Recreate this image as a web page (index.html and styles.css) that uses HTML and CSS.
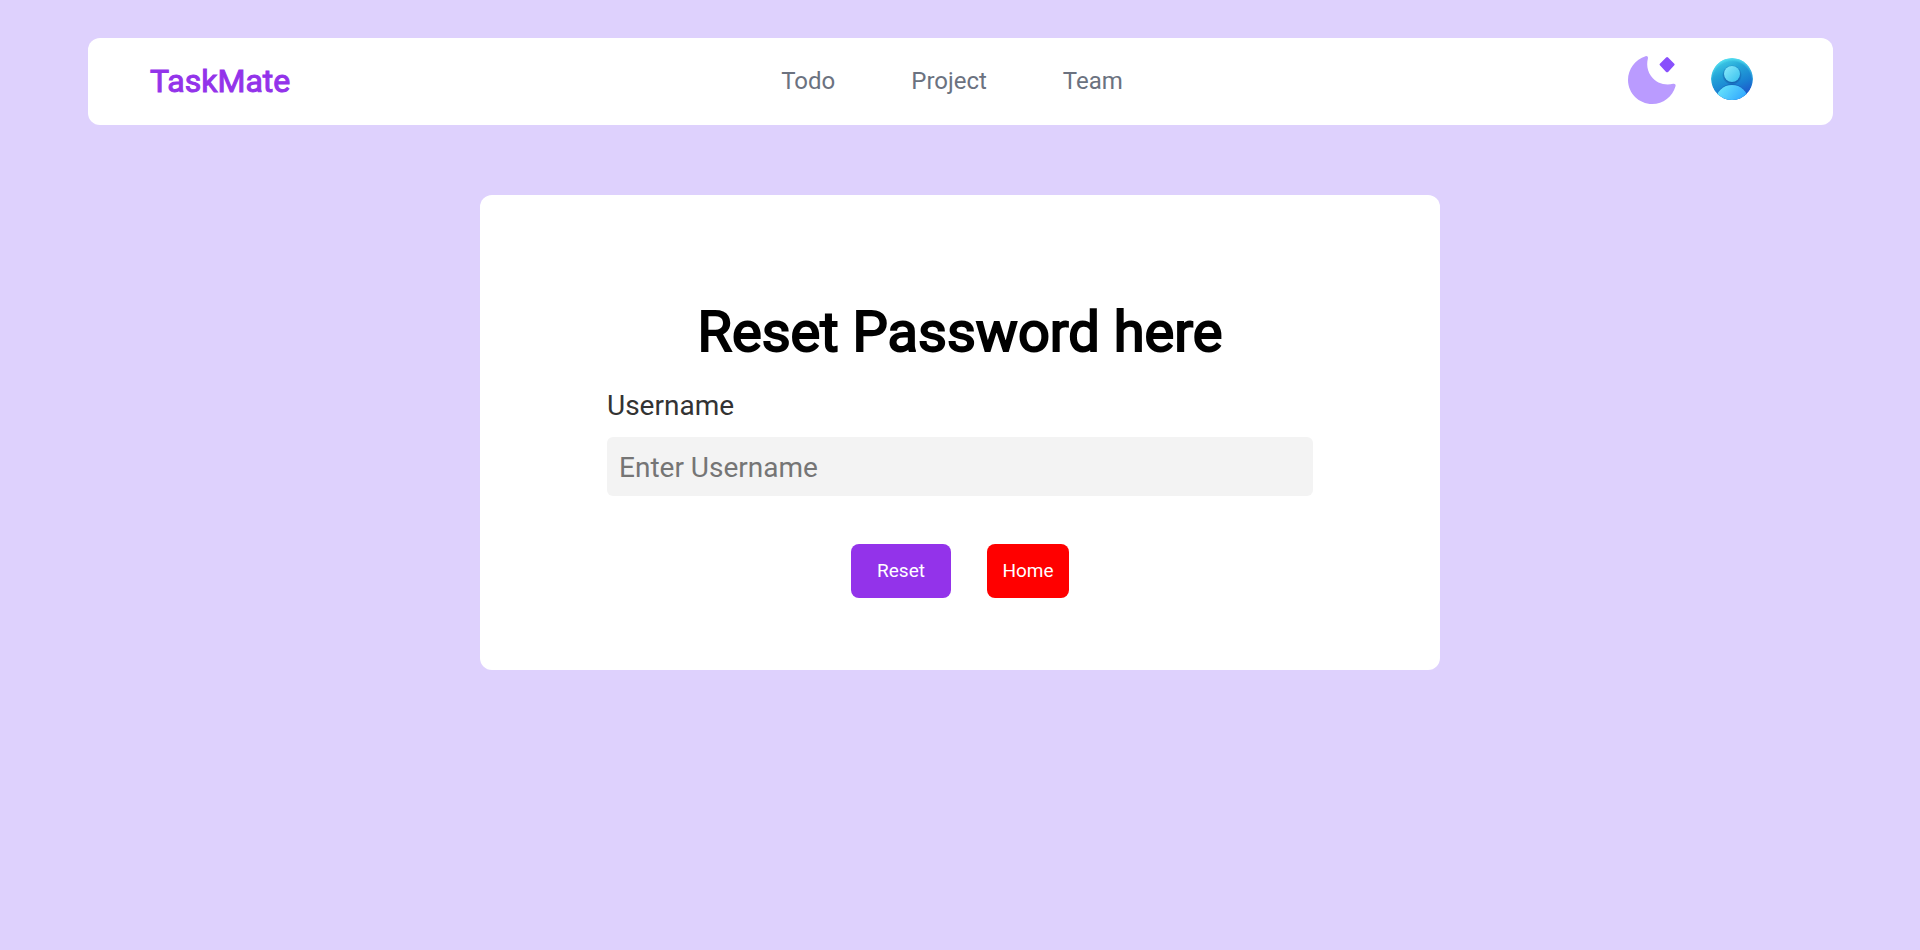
FILE: index.html
```html
<!DOCTYPE html>
<html lang="en">
<head>
<meta charset="utf-8">
<meta name="viewport" content="width=device-width, initial-scale=1">
<title>TaskMate</title>
<link rel="stylesheet" href="styles.css">
</head>
<body>
<header class="navbar">
  <a class="brand" href="#">TaskMate</a>
  <nav class="links">
    <a href="#">Todo</a>
    <a href="#">Project</a>
    <a href="#">Team</a>
  </nav>
  <div class="actions">
    <button class="icon-button" type="button" aria-label="Toggle dark mode">
      <svg width="48" height="48" viewBox="0 0 48 48" aria-hidden="true">
        <path fill="#ba9bff" d="M17.600 .2C19.200-.3 20.300 1 19.900 2.600C18.400 8.800 19.300 14.800 23 20C28.300 27.400 37 29.800 45.200 27.800C46.900 27.400 48 28.600 47.500 30.200C44.500 40.700 35.200 48 24.200 48C10.900 48 0 37.300 0 24C0 13 7.300 3.400 17.600 .2Z"/>
        <path fill="#8950fc" d="M38.100 1.500Q39.100 .5 40.100 1.500L46.300 7.700Q47.100 8.500 46.300 9.300L40.100 15.900Q39.100 16.700 38.100 15.900L31.900 9.300Q31.100 8.500 31.900 7.700Z"/>
      </svg>
    </button>
    <button class="icon-button" type="button" aria-label="Account">
      <svg width="43" height="44" viewBox="0 0 43 44" aria-hidden="true">
        <defs>
          <linearGradient id="disc" x1=".3" y1="0" x2=".75" y2="1">
            <stop offset="0" stop-color="#43cfe8"/>
            <stop offset=".3" stop-color="#24a5d8"/>
            <stop offset=".65" stop-color="#197fd2"/>
            <stop offset="1" stop-color="#1e49c8"/>
          </linearGradient>
          <linearGradient id="head" x1="0" y1="0" x2="1" y2="1">
            <stop offset="0" stop-color="#8cebfb"/>
            <stop offset="1" stop-color="#36c0ee"/>
          </linearGradient>
          <linearGradient id="torso" x1=".1" y1="0" x2=".8" y2=".6">
            <stop offset="0" stop-color="#6be8fb"/>
            <stop offset="1" stop-color="#2ea4ff"/>
          </linearGradient>
          <radialGradient id="rim" gradientUnits="userSpaceOnUse" cx="21" cy="23" r="23">
            <stop offset=".84" stop-color="#5ce8f5" stop-opacity="0"/>
            <stop offset="1" stop-color="#5ce8f5" stop-opacity=".8"/>
          </radialGradient>
          <radialGradient id="shade">
            <stop offset=".7" stop-color="#103f91" stop-opacity=".6"/>
            <stop offset="1" stop-color="#103f91" stop-opacity="0"/>
          </radialGradient>
          <clipPath id="round"><circle cx="21" cy="21" r="21"/></clipPath>
        </defs>
        <g clip-path="url(#round)">
          <circle cx="21" cy="21" r="21" fill="url(#disc)"/>
          <circle cx="21" cy="21" r="21" fill="url(#rim)"/>
          <circle cx="21" cy="17" r="10" fill="url(#shade)"/>
          <circle cx="21" cy="16" r="8" fill="url(#head)"/>
          <ellipse cx="21" cy="42" rx="16" ry="16" fill="#1758b0" opacity=".6"/>
          <ellipse cx="21" cy="42" rx="16" ry="15" fill="url(#torso)"/>
        </g>
      </svg>
    </button>
  </div>
</header>
<main class="card">
  <h1 class="title">Reset Password here</h1>
  <form class="form">
    <label class="label" for="username">Username</label>
    <input class="field" id="username" type="text" placeholder="Enter Username">
    <div class="buttons">
      <button class="button button-reset" type="submit">Reset</button>
      <a class="button button-home" href="#">Home</a>
    </div>
  </form>
</main>
</body>
</html>
```
FILE: styles.css
```css
* {
  box-sizing: border-box;
}

body {
  margin: 0;
  padding: 38px 0;
  min-height: 100vh;
  background: #ded1fd;
  font-family: Roboto, sans-serif;
}

.navbar {
  display: grid;
  grid-template-columns: 1fr auto 1fr;
  align-items: center;
  margin: 0 87px 0 88px;
  padding: 18px 79px 19px 62px;
  background: #fff;
  border-radius: 12px;
}

.brand {
  color: #9333ea;
  font-size: 32px;
  line-height: 40px;
  text-decoration: none;
  -webkit-text-stroke: 1px #9333ea;
}

.links {
  display: flex;
  gap: 76px;
}

.links a {
  color: #6b7280;
  font-size: 24px;
  line-height: 32px;
  text-decoration: none;
}

.actions {
  display: flex;
  justify-content: flex-end;
  align-items: center;
  gap: 35px;
  padding-bottom: 2px;
}

.icon-button {
  display: flex;
  padding: 0;
  border: 0;
  background: none;
  cursor: pointer;
}

.card {
  width: 50%;
  min-width: 720px;
  margin: 70px auto 0;
  padding: 101px 127px 72px;
  background: #fff;
  border-radius: 12px;
}

.title {
  margin: 0;
  color: #000;
  font-size: 56px;
  font-weight: 400;
  line-height: 72px;
  text-align: center;
  -webkit-text-stroke: 2px #000;
}

.form {
  display: flex;
  flex-direction: column;
  margin-top: 20px;
}

.label {
  color: #333;
  font-size: 28px;
  line-height: 36px;
}

.field {
  width: 100%;
  height: 59px;
  margin-top: 13px;
  padding: 2px 12px 0;
  border: 0;
  border-radius: 6px;
  background: #f3f3f3;
  font-family: inherit;
  font-size: 28px;
}

.field::placeholder {
  color: #757575;
}

.buttons {
  display: flex;
  justify-content: center;
  gap: 36px;
  margin-top: 48px;
}

.button {
  padding: 15px 0;
  border: 0;
  border-radius: 8px;
  color: #fff;
  font-family: inherit;
  font-size: 19px;
  line-height: 24px;
  text-align: center;
  text-decoration: none;
  cursor: pointer;
}

.button-reset {
  width: 100px;
  background: #9333ea;
}

.button-home {
  width: 82px;
  background: #f00;
}
```
